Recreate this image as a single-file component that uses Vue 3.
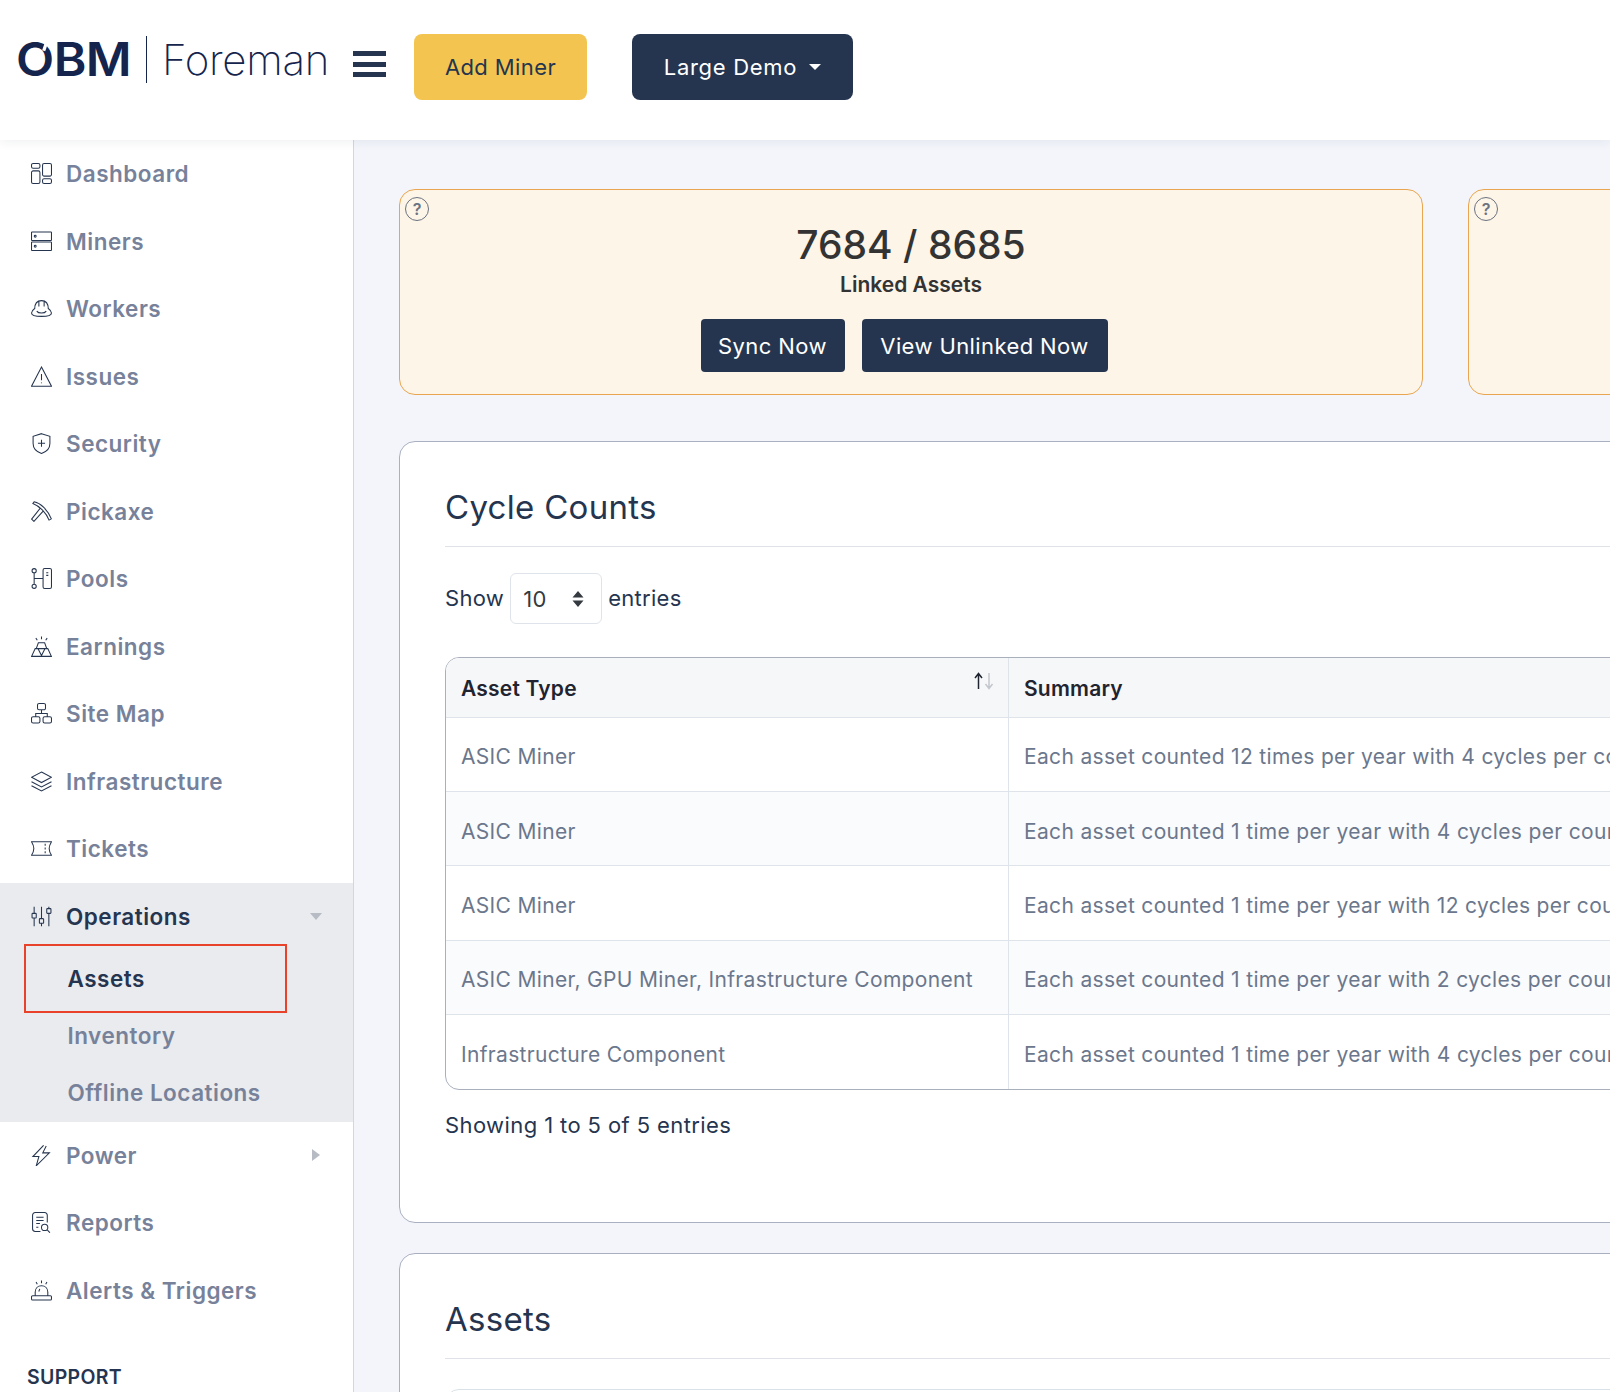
<script setup>
const rr = (x, y, w, h, r = 1.5) =>
  `M${x + r} ${y}H${x + w - r}A${r} ${r} 0 0 1 ${x + w} ${y + r}V${y + h - r}A${r} ${r} 0 0 1 ${x + w - r} ${y + h}H${x + r}A${r} ${r} 0 0 1 ${x} ${y + h - r}V${y + r}A${r} ${r} 0 0 1 ${x + r} ${y}Z`
const circ = (x, y, r) => `M${x - r} ${y}A${r} ${r} 0 1 1 ${x + r} ${y}A${r} ${r} 0 1 1 ${x - r} ${y}Z`

const icons = {
  dashboard: rr(0.5, 0.5, 8, 4.5) + rr(0.5, 7.5, 8, 12) + rr(11, 0.5, 8.5, 12) + rr(11, 15, 8.5, 4.5),
  miners: rr(0.5, 1, 19, 8, 0.5) + rr(0.5, 10.5, 19, 8, 0.5) + circ(4, 5, 0.9) + circ(4, 14.5, 0.9),
  workers: 'M3.5 10.5C3.5 5.5 6 2.5 10 2.5S16.5 5.5 16.5 10.5M7.5 3.2V8M12.5 3.2V8M3.5 10C1.5 11.5.5 13 .5 14.3C.5 16.5 5 17.5 10 17.5S19.5 16.5 19.5 14.3C19.5 13 18.5 11.5 16.5 10M5.5 12.5C7 15 13 15 14.5 12.5',
  issues: 'M10 1L19.5 19.2H.5ZM10 7.5L10 13.5M10 15.6V16.4',
  security: 'M10 .6L18 3.2V10C18 14.8 14.5 18 10 19.5C5.5 18 2 14.8 2 10V3.2ZM10 6.4V13.2M6.6 9.8H13.4',
  pickaxe: 'M3 .8C9 2 16 8.5 19.4 17L17.2 18.2C14.5 11.5 8.5 5 1.8 2.4ZM9 6.6L.6 17.2L2.8 19.4L11.8 9.4',
  pools: circ(3, 2.6, 2) + circ(3, 17.4, 2) + 'M3 4.6V15.4M3 10H11.5' + rr(11.5, 0.5, 8, 19, 1.5) + 'M14.5 4.6H16.5M14.5 7H16.5',
  earnings: 'M10 .4V3M4.6 2L6 4M15.4 2L14 4M7 6.5H13L15 12H5ZM4 12H16L19.4 19.4H.6ZM6.6 12L10 18.6L13.4 12',
  sitemap: rr(6.2, 0.5, 7.6, 6) + 'M10 6.5V10M4.5 13V10H15.5V13' + rr(0.5, 13, 8, 6) + rr(11.5, 13, 8, 6),
  layers: 'M10 1L19.5 6L10 11L.5 6ZM.5 10.2L10 15.2L19.5 10.2M.5 14L10 19L19.5 14',
  tickets: 'M.5 3.5H19.5C18 6 17.3 8 17.3 10S18 14 19.5 16.5H.5C2 14 2.7 12 2.7 10S2 6 .5 3.5ZM13.5 5.4V7.4M13.5 9V11M13.5 12.6V14.6',
  operations: 'M3 .6V7M3 11.5V19.4' + rr(1, 7, 4, 4.5, 0.6) + 'M10 .6V12M10 16.5V19.4' + rr(8, 12, 4, 4.5, 0.6) + 'M17 .6V2.5M17 7V19.4' + rr(15, 2.5, 4, 4.5, 0.6),
  power: 'M12 .3L1.8 11H7.5L5 19.8L17.5 7.5H11.2L14.5 1',
  reports: 'M15.5 10V3A2.5 2.5 0 0 0 13 .5H4A2.5 2.5 0 0 0 1.5 3V16A2.5 2.5 0 0 0 4 18.5H9M5 5H12M5 8H12M5 11H8.5M5 14.5H7' + circ(13, 14.7, 3) + 'M15.2 16.9L18 19.7',
  alerts: 'M10 .4V3M4.8 2L6 4M15.2 2L14 4M4 15V11.5C4 8 6.5 5.5 10 5.5S16 8 16 11.5V15M8.4 8.4L7.4 11' + rr(0.5, 15, 19, 4, 1),
}

const topItems = [
  ['Dashboard', 'dashboard'], ['Miners', 'miners'], ['Workers', 'workers'], ['Issues', 'issues'],
  ['Security', 'security'], ['Pickaxe', 'pickaxe'], ['Pools', 'pools'], ['Earnings', 'earnings'],
  ['Site Map', 'sitemap'], ['Infrastructure', 'layers'], ['Tickets', 'tickets'],
]
const subItems = ['Assets', 'Inventory', 'Offline Locations']
const bottomItems = [['Reports', 'reports'], ['Alerts & Triggers', 'alerts']]

const rows = [
  ['ASIC Miner', 'Each asset counted 12 times per year with 4 cycles per count'],
  ['ASIC Miner', 'Each asset counted 1 time per year with 4 cycles per count'],
  ['ASIC Miner', 'Each asset counted 1 time per year with 12 cycles per count'],
  ['ASIC Miner, GPU Miner, Infrastructure Component', 'Each asset counted 1 time per year with 2 cycles per count'],
  ['Infrastructure Component', 'Each asset counted 1 time per year with 4 cycles per count'],
]
</script>

<template>
  <div class="page">
    <header class="topbar">
      <div class="logo">
        <span class="obm">OBM</span>
        <span class="logo-divider"></span>
        <span class="foreman">Foreman</span>
      </div>
      <div class="burger"><span></span><span></span><span></span></div>
      <button class="btn-add">Add Miner</button>
      <button class="btn-demo">Large Demo<span class="caret-white"></span></button>
    </header>

    <div class="body">
      <aside class="sidebar">
        <a v-for="item in topItems" :key="item[0]" class="nav-item">
          <svg class="nav-icon" viewBox="0 0 20 20"><path :d="icons[item[1]]" /></svg>
          <span>{{ item[0] }}</span>
        </a>

        <div class="group">
          <a class="nav-item active">
            <svg class="nav-icon" viewBox="0 0 20 20"><path :d="icons.operations" /></svg>
            <span>Operations</span>
            <i class="tri-down"></i>
          </a>
          <a v-for="(s, i) in subItems" :key="s" class="sub-item" :class="{ current: i === 0 }">{{ s }}</a>
          <div class="red-box"></div>
        </div>

        <a class="nav-item">
          <svg class="nav-icon" viewBox="0 0 20 20"><path :d="icons.power" /></svg>
          <span>Power</span>
          <i class="tri-right"></i>
        </a>
        <a v-for="item in bottomItems" :key="item[0]" class="nav-item">
          <svg class="nav-icon" viewBox="0 0 20 20"><path :d="icons[item[1]]" /></svg>
          <span>{{ item[0] }}</span>
        </a>

        <div class="support">SUPPORT</div>
      </aside>

      <main class="main">
        <div class="kpis">
          <section class="kpi">
            <span class="help">?</span>
            <div class="kpi-num">7684 / 8685</div>
            <div class="kpi-label">Linked Assets</div>
            <div class="kpi-actions">
              <button class="btn-dark sync">Sync Now</button>
              <button class="btn-dark view">View Unlinked Now</button>
            </div>
          </section>
          <section class="kpi"><span class="help">?</span></section>
        </div>

        <section class="card">
          <h2 class="card-title">Cycle Counts</h2>
          <div class="length">
            <span class="length-text">Show</span>
            <div class="select">
              <span>10</span>
              <svg width="12" height="16" viewBox="0 0 12 16"><path d="M6 0L11.5 6.5H.5ZM6 16L.5 9.5H11.5Z" fill="#343a40" /></svg>
            </div>
            <span class="length-text">entries</span>
          </div>
          <div class="table-wrap">
            <table class="table">
              <colgroup><col class="c1" /><col /></colgroup>
              <thead>
                <tr>
                  <th class="sortable">
                    Asset Type
                    <svg class="sort" width="20" height="18" viewBox="0 0 20 18">
                      <path d="M4.5 17V2M1 6L4.5 1.5L8 6" stroke="#1f2430" />
                      <path d="M15 1V16M11.5 12L15 16.5L18.5 12" stroke="#c3c7cd" />
                    </svg>
                  </th>
                  <th>Summary</th>
                </tr>
              </thead>
              <tbody>
                <tr v-for="(r, i) in rows" :key="i">
                  <td>{{ r[0] }}</td>
                  <td>{{ r[1] }}</td>
                </tr>
              </tbody>
            </table>
          </div>
          <div class="info">Showing 1 to 5 of 5 entries</div>
        </section>

        <section class="card">
          <h2 class="card-title">Assets</h2>
          <div class="table-stub"></div>
        </section>
      </main>
    </div>
  </div>
</template>

<style scoped>
.page {
  width: 1610px;
  height: 1392px;
  overflow: hidden;
  display: flex;
  flex-direction: column;
  font-family: Inter, "Liberation Sans", sans-serif;
  color: #26354f;
  background: #f3f5fb;
}
.topbar {
  position: relative;
  z-index: 2;
  flex: 0 0 140px;
  display: flex;
  align-items: center;
  padding: 0 0 6px 16px;
  box-sizing: border-box;
  background: #fff;
  box-shadow: 0 2px 10px rgba(30, 40, 70, 0.07);
}
.logo {
  display: flex;
  align-items: center;
  width: 337px;
  margin-bottom: 16px;
  color: #15244d;
}
.obm {
  position: relative;
  width: 113px;
  font-size: 46px;
  line-height: 48px;
  font-weight: 600;
  letter-spacing: -0.5px;
  transform: scaleX(1.08);
  transform-origin: left center;
}
.obm::after {
  content: "";
  position: absolute;
  left: 26px;
  top: 4px;
  width: 3px;
  height: 12px;
  background: #fff;
  transform: rotate(18deg);
}
.logo-divider {
  width: 1px;
  height: 47px;
  margin: 0 15px 0 17px;
  background: #15244d;
}
.foreman {
  font-size: 42px;
  line-height: 48px;
  font-weight: 250;
  letter-spacing: -0.3px;
  padding-top: 2px;
}
.burger {
  width: 33px;
  display: flex;
  flex-direction: column;
  gap: 5.5px;
  margin: 0 28px 6px 0;
}
.burger span {
  height: 5px;
  background: #26354f;
}
button {
  border: none;
  font-family: inherit;
  cursor: pointer;
}
.btn-add,
.btn-demo {
  height: 66px;
  border-radius: 8px;
  font-size: 22px;
  padding: 0;
}
.btn-add {
  width: 173px;
  margin-right: 45px;
  background: #f3c550;
  color: #26354f;
  letter-spacing: 0.4px;
}
.btn-demo {
  width: 221px;
  background: #26354f;
  color: #fff;
  display: flex;
  align-items: center;
  justify-content: center;
  gap: 12px;
  letter-spacing: 0.7px;
}
.caret-white {
  width: 0;
  height: 0;
  border-left: 6px solid transparent;
  border-right: 6px solid transparent;
  border-top: 6px solid #fff;
}
.body {
  flex: 1;
  display: flex;
  min-height: 0;
}
.sidebar {
  flex: 0 0 354px;
  box-sizing: border-box;
  border-right: 1px solid #cfd8e0;
  background: #fff;
  overflow: hidden;
}
.nav-item {
  height: 67.5px;
  display: flex;
  align-items: center;
  gap: 14px;
  padding: 0 31px 0 31px;
  font-size: 22.5px;
  font-weight: 600;
  letter-spacing: 0.5px;
  color: #77829a;
}
.nav-icon {
  flex: 0 0 21px;
  width: 21px;
  height: 21px;
  fill: none;
  stroke: #26354f;
  stroke-width: 1;
}
.group {
  position: relative;
  background: #e9ebef;
}
.nav-item.active {
  color: #26354f;
}
.tri-down,
.tri-right {
  width: 0;
  height: 0;
  margin-left: auto;
}
.tri-down {
  border-left: 6px solid transparent;
  border-right: 6px solid transparent;
  border-top: 7px solid #b6bbc4;
}
.tri-right {
  margin-right: 2px;
  border-top: 6px solid transparent;
  border-bottom: 6px solid transparent;
  border-left: 8px solid #b6bbc4;
}
.sub-item {
  display: flex;
  align-items: center;
  height: 57.2px;
  padding-left: 67.5px;
  font-size: 22.5px;
  font-weight: 600;
  letter-spacing: 0.5px;
  color: #77829a;
}
.sub-item.current {
  color: #26354f;
}
.red-box {
  position: absolute;
  left: 24px;
  top: 61px;
  width: 263px;
  height: 69px;
  box-sizing: border-box;
  border: 2px solid #e8432a;
}
.support {
  margin-top: 40px;
  padding-left: 27px;
  font-size: 19.5px;
  line-height: 26px;
  font-weight: 600;
  letter-spacing: 0.3px;
}
.main {
  flex: 1;
  min-width: 0;
  overflow: hidden;
  padding: 49px 0 0 45px;
}
.kpis {
  display: flex;
  gap: 45px;
  width: 2093px;
  margin-bottom: 46px;
}
.kpi {
  position: relative;
  flex: 0 0 1024px;
  box-sizing: border-box;
  height: 206px;
  padding-top: 32px;
  display: flex;
  flex-direction: column;
  align-items: center;
  background: #fdf5e7;
  border: 1px solid #e9a54f;
  border-radius: 16px;
}
.help {
  position: absolute;
  left: 5px;
  top: 7px;
  width: 24px;
  height: 24px;
  box-sizing: border-box;
  border: 1px solid #6b7280;
  border-radius: 50%;
  display: flex;
  align-items: center;
  justify-content: center;
  font-size: 16px;
  font-weight: 600;
  color: #6b7280;
}
.kpi-num {
  font-size: 39px;
  line-height: 46px;
  font-weight: 500;
  color: #333;
}
.kpi-label {
  margin-top: 3px;
  font-size: 21px;
  line-height: 28px;
  font-weight: 600;
  color: #333;
}
.kpi-actions {
  display: flex;
  gap: 17px;
  margin: 20px 14px 0 0;
}
.btn-dark {
  height: 53px;
  padding: 0;
  border-radius: 4px;
  background: #26354f;
  color: #fff;
  font-size: 22px;
  letter-spacing: 0.4px;
}
.sync {
  width: 144px;
}
.view {
  width: 246px;
}
.card {
  width: 2093px;
  box-sizing: border-box;
  margin-bottom: 30px;
  padding: 44px 45px 82px;
  background: #fff;
  border: 1px solid #a9b0c0;
  border-radius: 16px;
}
.card-title {
  margin: 0 0 26px;
  padding-bottom: 18px;
  border-bottom: 1px solid #dfe3e8;
  font-size: 33px;
  line-height: 42px;
  font-weight: 400;
  letter-spacing: 0.3px;
  color: #26354f;
}
.length {
  display: flex;
  align-items: center;
  gap: 6px;
  height: 51px;
  margin-bottom: 33px;
  font-size: 22px;
}
.length-text {
  padding-bottom: 2px;
  letter-spacing: 0.3px;
}
.select {
  width: 92px;
  height: 51px;
  box-sizing: border-box;
  padding: 0 17px 0 12px;
  display: flex;
  align-items: center;
  justify-content: space-between;
  border: 1px solid #dfe4ea;
  border-radius: 6px;
  color: #343a40;
  letter-spacing: 0.5px;
}
.table-wrap {
  border: 1px solid #a9b0bc;
  border-radius: 14px;
  overflow: hidden;
}
.table {
  width: 100%;
  table-layout: fixed;
  border-collapse: separate;
  border-spacing: 0;
}
.c1 {
  width: 563px;
}
th,
td {
  padding: 3px 15px 0;
  text-align: left;
  white-space: nowrap;
  overflow: hidden;
  border-right: 1px solid #dfe3ea;
  box-sizing: border-box;
  letter-spacing: 0.33px;
}
th:last-child,
td:last-child {
  border-right: none;
}
th {
  position: relative;
  height: 59.5px;
  background: #f6f7f9;
  border-bottom: 1px solid #dfe3ea;
  font-size: 21px;
  font-weight: 600;
  letter-spacing: 0.2px;
  color: #1f2430;
}
td {
  height: 74.4px;
  padding-top: 5px;
  border-bottom: 1px solid #dfe3ea;
  font-size: 21px;
  color: #6b778c;
}
tbody tr:nth-child(even) td {
  background: #fafbfd;
}
tbody tr:last-child td {
  border-bottom: none;
}
.sort {
  position: absolute;
  right: 14px;
  top: 14px;
  fill: none;
  stroke-width: 1.5;
}
.info {
  margin-top: 20px;
  font-size: 22px;
  line-height: 30px;
  letter-spacing: 0.4px;
}
.table-stub {
  height: 120px;
  margin-top: 30px;
  border: 1px solid #d9e2e8;
  border-radius: 14px;
}
</style>

<style>
html,
body {
  margin: 0;
  overflow: hidden;
}
</style>
